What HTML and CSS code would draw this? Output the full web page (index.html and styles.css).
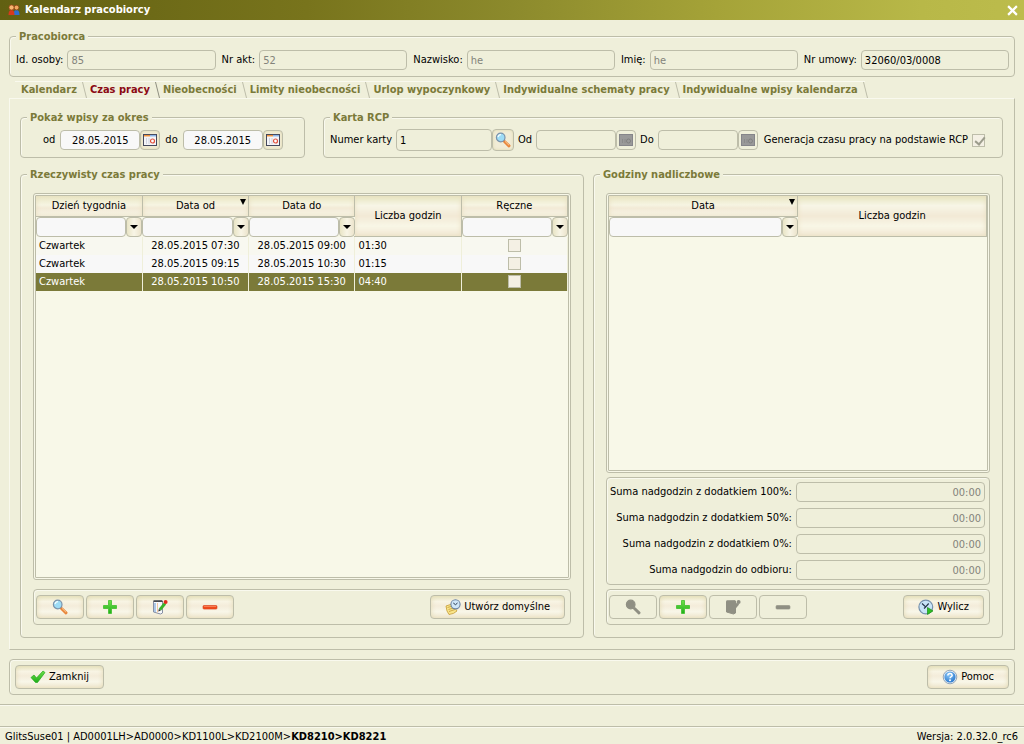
FILE: index.html
```html
<!DOCTYPE html>
<html lang="pl">
<head>
    <meta charset="UTF-8">
    <meta name="viewport" content="width=device-width, initial-scale=1.0">
    <title>Kalendarz pracobiorcy</title>
    <link rel="stylesheet" href="styles.css">
</head>
<body>
    <svg class="icon-defs" aria-hidden="true">
        <defs>
            <linearGradient id="greenFill" x1="0" y1="0" x2="0" y2="1">
                <stop offset="0" stop-color="#6fe04a"/>
                <stop offset="1" stop-color="#1fae1a"/>
            </linearGradient>
            <radialGradient id="blueFill" cx="0.4" cy="0.3" r="0.8">
                <stop offset="0" stop-color="#8cc8f8"/>
                <stop offset="1" stop-color="#1f6fc8"/>
            </radialGradient>
        </defs>
        <symbol id="i-search" viewBox="0 0 16 16">
            <path d="M9.500 9.500l4.500 4.300" stroke="#e8853a" stroke-width="3" stroke-linecap="round"/>
            <path d="M10 9.300l4.100 4" stroke="#f8c890" stroke-width="1"/>
            <circle cx="5.700" cy="5.500" r="4.300" fill="#9edcf6" stroke="#7b93ab" stroke-width="1.200"/>
            <path d="M3 5a3 3 0 0 1 3-2.300" stroke="#f0fcff" stroke-width="1.300" fill="none"/>
        </symbol>
        <symbol id="i-plus" viewBox="0 0 16 16">
            <path d="M6.500 1.500h3v5h5v3h-5v5h-3v-5h-5v-3h5z" fill="url(#greenFill)" stroke="#3fbf2c" stroke-width=".8" stroke-linejoin="round"/>
        </symbol>
        <symbol id="i-edit" viewBox="0 0 16 16">
            <path d="M1.500 2.500l9-.5v12l-2 1-7-2z" fill="#f6f8fc" stroke="#8890a4"/>
            <path d="M1.500 1.300h8.500l1 1.700h-9.500z" fill="#44484e"/>
            <path d="M5.500 4v9.500" stroke="#f0c8a0"/>
            <path d="M3 4v9" stroke="#94b8e0" stroke-width="1.500"/>
            <path d="M8 10.500l5-6" stroke="#38b428" stroke-width="2.800"/>
            <path d="M6.300 12.500l.6-2.700 2 1.600z" fill="#333"/>
            <circle cx="13.600" cy="2.900" r="2" fill="#e02a1c"/>
        </symbol>
        <symbol id="i-minus" viewBox="0 0 16 16">
            <rect x="1" y="6.500" width="14" height="3.600" rx="1" fill="#f04a1c" stroke="#d8401c" stroke-width=".6"/>
            <path d="M2 7.500h12" stroke="#fb8a62" stroke-width=".8"/>
        </symbol>
        <symbol id="i-check" viewBox="0 0 16 16">
            <path d="M1 8.500L4 6l2.500 3L13 2l2 1.500L7.500 13.500h-2z" fill="url(#greenFill)" stroke="#25a81e" stroke-width=".7" stroke-linejoin="round"/>
        </symbol>
        <symbol id="i-notes" viewBox="0 0 16 16">
            <path d="M1 7q3-1 6-2l5 7q-3 3-8 3.500l-2-3.500z" fill="#f9e48a" stroke="#c49a34" stroke-width=".8"/>
            <path d="M2.500 8.500l5-1.500M3.500 10.500l5-1.500M4 12.500l6-2" stroke="#c49a34" stroke-width=".8"/>
            <circle cx="10.500" cy="5.300" r="4.600" fill="#cfe6f8" stroke="#6c84a4" stroke-width="1.100"/>
            <path d="M8.300 4l2.200 1.700L12.500 4" fill="none" stroke="#26364c"/>
        </symbol>
        <symbol id="i-clock" viewBox="0 0 16 16">
            <circle cx="7.800" cy="8" r="6.900" fill="#c8e4f8" stroke="#7690ac" stroke-width="1.200"/>
            <path d="M4 4.500L7.700 8l3-3.500M7.700 8L6 9.500" fill="none" stroke="#25364c" stroke-width="1.200"/>
            <path d="M9.500 8.500l5.500 3.400-5.500 3.600z" fill="#2fbe24" stroke="#178e16" stroke-width=".7"/>
        </symbol>
        <symbol id="i-help" viewBox="0 0 16 16">
            <circle cx="8" cy="8" r="6.800" fill="#e8f0f8" stroke="#7f93aa" stroke-width=".8"/>
            <circle cx="8" cy="8" r="5.600" fill="url(#blueFill)"/>
            <path d="M5.800 6.500q.2-2 2.200-2t2.200 1.800q0 1-1.200 1.600-.9.500-.9 1.300" fill="none" stroke="#fff" stroke-width="1.500"/>
            <circle cx="8" cy="11.300" r="1" fill="#fff"/>
        </symbol>
        <symbol id="i-calendar" viewBox="0 0 14 12">
            <rect x=".5" y=".5" width="13" height="11" fill="#f4f4f8" stroke="#44485c"/>
            <path d="M1 1.700h6" stroke="#f0923c" stroke-width="1.500"/>
            <path d="M7 1.700h6" stroke="#8cb4e8" stroke-width="1.500"/>
            <path d="M3.500 4v6M6 4v6" stroke="#d0d4e0"/>
            <circle cx="9.500" cy="7" r="2" fill="#fff" stroke="#e2513c" stroke-width="1.200"/>
        </symbol>
        <symbol id="i-calendar-off" viewBox="0 0 14 12">
            <rect x=".5" y=".5" width="13" height="11" fill="#999" stroke="#85858a"/>
            <path d="M3.500 5v4M6 5v4" stroke="#8a8a8a"/>
            <circle cx="9.500" cy="7" r="2" fill="none" stroke="#808080"/>
        </symbol>
        <symbol id="i-people" viewBox="0 0 12 12">
            <path d="M5.500 11q0-5 3-5t3 5z" fill="#2f6fd0"/>
            <circle cx="8.500" cy="3.600" r="2.400" fill="#f0a860" stroke="#8a3c10" stroke-width=".7"/>
            <path d="M.5 11q0-5 3-5t3 5z" fill="#d83a1c"/>
            <circle cx="3.500" cy="3.500" r="2.500" fill="#f6b870" stroke="#a8401c" stroke-width=".7"/>
        </symbol>
    </svg>

    <header class="titlebar">
        <svg class="app-icon"><use href="#i-people"/></svg>
        <h1>Kalendarz pracobiorcy</h1>
        <button class="close" aria-label="Zamknij okno">
            <svg viewBox="0 0 10 10"><path d="M1 1l8 8M9 1l-8 8" stroke="#fff" stroke-width="2"/></svg>
        </button>
    </header>

    <main>
        <fieldset class="group person">
            <legend>Pracobiorca</legend>
            <label for="idOsoby">Id. osoby:</label>
            <input id="idOsoby" type="text" value="85" disabled>
            <label for="nrAkt">Nr akt:</label>
            <input id="nrAkt" type="text" value="52" disabled>
            <label for="nazwisko">Nazwisko:</label>
            <input id="nazwisko" type="text" value="he" disabled>
            <label for="imie">Imię:</label>
            <input id="imie" type="text" value="he" disabled>
            <label for="nrUmowy">Nr umowy:</label>
            <input id="nrUmowy" type="text" value="32060/03/0008" readonly>
        </fieldset>

        <nav class="tabs">
            <a href="#">Kalendarz</a>
            <a href="#" class="active">Czas pracy</a>
            <a href="#">Nieobecności</a>
            <a href="#">Limity nieobecności</a>
            <a href="#">Urlop wypoczynkowy</a>
            <a href="#">Indywidualne schematy pracy</a>
            <a href="#">Indywidualne wpisy kalendarza</a>
        </nav>

        <section class="tab-panel">
            <div class="filters">
                <fieldset class="group period">
                    <legend>Pokaż wpisy za okres</legend>
                    <label for="od" class="first">od</label>
                    <span class="picker">
                        <input id="od" type="text" value="28.05.2015">
                        <button aria-label="Wybierz datę od"><svg><use href="#i-calendar"/></svg></button>
                    </span>
                    <label for="do">do</label>
                    <span class="picker">
                        <input id="do" type="text" value="28.05.2015">
                        <button aria-label="Wybierz datę do"><svg><use href="#i-calendar"/></svg></button>
                    </span>
                </fieldset>
                <fieldset class="group card">
                    <legend>Karta RCP</legend>
                    <label for="karta">Numer karty</label>
                    <span class="picker lookup">
                        <input id="karta" type="text" value="1" readonly>
                        <button aria-label="Szukaj karty"><svg><use href="#i-search"/></svg></button>
                    </span>
                    <label for="kartaOd">Od</label>
                    <span class="picker">
                        <input id="kartaOd" type="text" disabled>
                        <button aria-label="Karta od" disabled><svg><use href="#i-calendar-off"/></svg></button>
                    </span>
                    <label for="kartaDo">Do</label>
                    <span class="picker">
                        <input id="kartaDo" type="text" disabled>
                        <button aria-label="Karta do" disabled><svg><use href="#i-calendar-off"/></svg></button>
                    </span>
                    <label class="generate">Generacja czasu pracy na podstawie RCP <input type="checkbox" checked disabled></label>
                </fieldset>
            </div>

            <div class="columns">
                <fieldset class="group worktime">
                    <legend>Rzeczywisty czas pracy</legend>
                    <div class="grid-frame">
                        <table>
                            <thead>
                                <tr>
                                    <th>Dzień tygodnia</th>
                                    <th class="sorted">Data od</th>
                                    <th>Data do</th>
                                    <th rowspan="2" class="tall">Liczba godzin</th>
                                    <th>Ręczne</th>
                                </tr>
                                <tr class="filter-row">
                                    <td><div class="combo"><input type="text" aria-label="Filtr: dzień tygodnia"><button aria-label="Rozwiń"></button></div></td>
                                    <td><div class="combo"><input type="text" aria-label="Filtr: data od"><button aria-label="Rozwiń"></button></div></td>
                                    <td><div class="combo"><input type="text" aria-label="Filtr: data do"><button aria-label="Rozwiń"></button></div></td>
                                    <td><div class="combo"><input type="text" aria-label="Filtr: ręczne"><button aria-label="Rozwiń"></button></div></td>
                                </tr>
                            </thead>
                            <tbody>
                                <tr>
                                    <td>Czwartek</td>
                                    <td class="date">28.05.2015 07:30</td>
                                    <td class="date">28.05.2015 09:00</td>
                                    <td>01:30</td>
                                    <td class="tick"><input type="checkbox" aria-label="Ręczne" disabled></td>
                                </tr>
                                <tr>
                                    <td>Czwartek</td>
                                    <td class="date">28.05.2015 09:15</td>
                                    <td class="date">28.05.2015 10:30</td>
                                    <td>01:15</td>
                                    <td class="tick"><input type="checkbox" aria-label="Ręczne" disabled></td>
                                </tr>
                                <tr class="selected">
                                    <td>Czwartek</td>
                                    <td class="date">28.05.2015 10:50</td>
                                    <td class="date">28.05.2015 15:30</td>
                                    <td>04:40</td>
                                    <td class="tick"><input type="checkbox" aria-label="Ręczne" disabled></td>
                                </tr>
                            </tbody>
                        </table>
                    </div>
                    <div class="box toolbar">
                        <button class="btn icon-btn" aria-label="Podgląd"><svg><use href="#i-search"/></svg></button>
                        <button class="btn icon-btn" aria-label="Dodaj"><svg><use href="#i-plus"/></svg></button>
                        <button class="btn icon-btn" aria-label="Edytuj"><svg><use href="#i-edit"/></svg></button>
                        <button class="btn icon-btn" aria-label="Usuń"><svg><use href="#i-minus"/></svg></button>
                        <button class="btn push"><svg><use href="#i-notes"/></svg>Utwórz domyślne</button>
                    </div>
                </fieldset>

                <fieldset class="group overtime">
                    <legend>Godziny nadliczbowe</legend>
                    <div class="grid-frame">
                        <table>
                            <thead>
                                <tr>
                                    <th class="sorted">Data</th>
                                    <th rowspan="2" class="tall">Liczba godzin</th>
                                </tr>
                                <tr class="filter-row">
                                    <td><div class="combo"><input type="text" aria-label="Filtr: data"><button aria-label="Rozwiń"></button></div></td>
                                </tr>
                            </thead>
                        </table>
                    </div>
                    <div class="box sums">
                        <label for="suma100">Suma nadgodzin z dodatkiem 100%:</label>
                        <input id="suma100" type="text" value="00:00" disabled>
                        <label for="suma50">Suma nadgodzin z dodatkiem 50%:</label>
                        <input id="suma50" type="text" value="00:00" disabled>
                        <label for="suma0">Suma nadgodzin z dodatkiem 0%:</label>
                        <input id="suma0" type="text" value="00:00" disabled>
                        <label for="sumaOdbior">Suma nadgodzin do odbioru:</label>
                        <input id="sumaOdbior" type="text" value="00:00" disabled>
                    </div>
                    <div class="box toolbar">
                        <button class="btn icon-btn" aria-label="Podgląd" disabled><svg><use href="#i-search"/></svg></button>
                        <button class="btn icon-btn" aria-label="Dodaj"><svg><use href="#i-plus"/></svg></button>
                        <button class="btn icon-btn" aria-label="Edytuj" disabled><svg><use href="#i-edit"/></svg></button>
                        <button class="btn icon-btn" aria-label="Usuń" disabled><svg><use href="#i-minus"/></svg></button>
                        <button class="btn push"><svg><use href="#i-clock"/></svg>Wylicz</button>
                    </div>
                </fieldset>
            </div>
        </section>

        <div class="box toolbar actions">
            <button class="btn"><svg><use href="#i-check"/></svg>Zamknij</button>
            <button class="btn push"><svg><use href="#i-help"/></svg>Pomoc</button>
        </div>
    </main>

    <div class="message-bar"></div>
    <footer class="statusbar">
        <span>GlitsSuse01 | AD0001LH&gt;AD0000&gt;KD1100L&gt;KD2100M&gt;<b>KD8210&gt;KD8221</b></span>
        <span>Wersja: 2.0.32.0_rc6</span>
    </footer>
</body>
</html>
```
FILE: styles.css
```css
* {
    box-sizing: border-box;
}

body {
    margin: 0;
    min-height: 100vh;
    display: flex;
    flex-direction: column;
    background-color: #efefda;
    color: #000;
    font-family: "DejaVu Sans Condensed", "DejaVu Sans", sans-serif;
    font-size: 11px;
    line-height: 14px;
}

input,
button {
    font: inherit;
    color: inherit;
    margin: 0;
}

label {
    white-space: nowrap;
}

.icon-defs {
    position: absolute;
    width: 0;
    height: 0;
}

/* title bar */
.titlebar {
    display: flex;
    align-items: center;
    height: 20px;
    padding: 0 6px 0 8px;
    background: linear-gradient(to right, #626012, #78741c 30%, #8c8a2c 50%, #a5a338 70%, #b8b848 90%, #bcbc4c);
    color: #fff;
}

.titlebar h1 {
    margin: 0;
    flex: 1;
    font-size: 11px;
}

.app-icon {
    width: 12px;
    height: 12px;
    margin-right: 5px;
}

.close {
    padding: 0;
    border: none;
    background: none;
    line-height: 0;
}

.close svg {
    width: 11px;
    height: 11px;
}

main {
    flex: 1;
    display: flex;
    flex-direction: column;
    padding: 9px;
}

/* framed groups */
.group {
    margin: 0;
    min-width: 0;
    padding: 6px 5px 6px 6px;
    border: 1px solid #bdbda9;
    border-radius: 4px;
    box-shadow: inset 1px 1px 0 #f9f9ee;
}

.group legend {
    padding: 0 3px;
    background-color: #efefda;
    color: #7b7a39;
    font-weight: bold;
    line-height: 15px;
}

.box {
    border: 1px solid #bdbda9;
    border-radius: 4px;
    box-shadow: inset 1px 1px 0 #f9f9ee;
}

input[type="text"] {
    height: 20px;
    min-width: 0;
    padding: 0 3px;
    border: 1px solid #bdbda9;
    border-radius: 4px;
    background-color: #f8f8f8;
    outline: none;
}

input[type="text"]:disabled,
input[type="text"]:read-only {
    background-color: #efefda;
}

input[type="text"]:disabled {
    color: #83837b;
}

input[type="checkbox"] {
    appearance: none;
    display: block;
    width: 13px;
    height: 13px;
    border: 1px solid #bdbda9;
    background-color: #f4f0e4;
}

input[type="checkbox"]:checked::after {
    content: "";
    display: block;
    width: 4px;
    height: 8px;
    margin-left: 4px;
    border: solid #9c9c8c;
    border-width: 0 2px 2px 0;
    transform: rotate(40deg);
}

.person {
    display: flex;
    align-items: center;
    gap: 4px;
}

.person input {
    flex: 1;
    margin-right: 2px;
}

.person input:last-child {
    margin-right: 0;
}

/* tabs */
.tabs {
    display: flex;
    height: 17px;
    margin-top: 4px;
    padding-left: 6px;
}

.tabs a {
    position: relative;
    padding: 0 7px 0 6px;
    border-top: 1px solid #f9f9ee;
    color: #7b7a39;
    font-weight: bold;
    line-height: 15px;
    text-decoration: none;
    white-space: nowrap;
}

.tabs a::after {
    content: "";
    position: absolute;
    top: 0;
    right: -1px;
    width: 1px;
    height: 16px;
    background-color: #bdbda9;
    transform: skewX(14deg);
}

.tabs a.active {
    color: #8b0a14;
}

.tabs a.active::after {
    background-color: #8f8f80;
}

.tab-panel {
    flex: 1;
    display: flex;
    flex-direction: column;
    gap: 9px;
    padding: 11px 11px 11px 10px;
    border: 1px solid #bdbda9;
    border-top-color: #f9f9ee;
    border-left-color: #f9f9ee;
}

.filters {
    display: grid;
    grid-template-columns: minmax(0, 285fr) minmax(0, 680fr);
    gap: 18px;
}

.period,
.card {
    display: flex;
    align-items: center;
    gap: 5px;
    padding-top: 4px;
}

.period .first {
    margin-left: 16px;
}

.card {
    gap: 4px;
}

.picker {
    display: flex;
}

.picker input[type="text"] {
    width: 80px;
}

.picker button {
    display: flex;
    align-items: center;
    justify-content: center;
    width: 20px;
    height: 20px;
    padding: 0;
    border: 1px solid #bdbda9;
    border-radius: 4px;
    background-color: #f1ecd6;
    box-shadow: inset 0 0 3px #dcd8ac;
}

.picker button:disabled {
    background: none;
    box-shadow: none;
}

.picker svg {
    width: 14px;
    height: 12px;
}

.period .picker input {
    text-align: center;
}

.lookup input[type="text"] {
    width: 96px;
    height: 22px;
}

.lookup button {
    width: 22px;
    height: 22px;
}

.lookup svg {
    width: 16px;
    height: 16px;
}

.generate {
    display: flex;
    align-items: center;
    gap: 4px;
    margin-left: 2px;
}

/* two main columns */
.columns {
    flex: 1;
    display: grid;
    grid-template-columns: minmax(0, 564fr) minmax(0, 410fr);
    gap: 9px;
}

.worktime,
.overtime {
    display: flex;
    flex-direction: column;
    padding: 11px 12px 12px;
}

.worktime legend,
.overtime legend {
    margin-left: -6px;
}

.grid-frame {
    flex: 1;
    border: 3px double #bdbda9;
    border-radius: 3px;
    background-color: #f8f8e8;
}

table {
    width: 100%;
    table-layout: fixed;
    border-collapse: collapse;
}

th {
    position: relative;
    height: 20px;
    padding: 0;
    border-right: 1px solid #bdbda9;
    border-bottom: 1px solid #bdbda9;
    background: linear-gradient(#e9e7c4, #f6f4e2 45%, #f2ead6 60%, #f8f6e8);
    box-shadow: inset 0 0 5px #e9dfc0;
    font-weight: normal;
}

th.tall {
    background: linear-gradient(#e6e5c0, #f7f5e6 24%, #f2e9d5 50%, #f8f6e6 75%, #f2e8d4);
}

.sorted::after {
    content: "";
    position: absolute;
    top: 3px;
    right: 2px;
    border: 3px solid transparent;
    border-top: 6px solid #000;
    border-bottom: none;
}

.filter-row td {
    height: 20px;
    padding: 0;
    border: none;
}

.combo {
    display: flex;
}

.combo input[type="text"] {
    flex: 1;
    width: 0;
}

.combo button {
    width: 16px;
    height: 20px;
    padding: 0 0 0 3px;
    border: 1px solid #bdbda9;
    border-radius: 4px;
    background: linear-gradient(to right, #e9e5c6, #f8f5e6, #ece4cc);
}

.combo button::before {
    content: "";
    display: block;
    width: 0;
    border: 4px solid transparent;
    border-top-color: #000;
    border-bottom: none;
}

tbody td {
    height: 18px;
    padding: 0 3px;
    border-right: 1px solid #efefda;
    background-color: #f8f8f0;
    white-space: nowrap;
}

tbody tr:nth-child(even) td {
    background-color: #f8f8f8;
}

tbody .selected td {
    background-color: #7b7a39;
    color: #fff;
}

.date {
    text-align: center;
}

.tick input[type="checkbox"] {
    margin: 0 auto;
}

/* buttons */
.toolbar {
    display: flex;
    gap: 2px;
    margin-top: 9px;
    padding: 5px 5px 5px 2px;
}

.btn {
    display: flex;
    align-items: center;
    justify-content: center;
    gap: 3px;
    height: 24px;
    padding: 0 14px;
    border: 1px solid #bdbda9;
    border-radius: 4px;
    background: linear-gradient(#e9e6c4, #f8f4e4 25%, #f4ecda 45%, #f8f6e8 70%, #f3ebd6);
    box-shadow: inset 0 0 5px #e2dab4;
    white-space: nowrap;
}

.btn svg {
    width: 16px;
    height: 16px;
}

.icon-btn {
    width: 48px;
    padding: 0;
}

.btn:disabled {
    background: none;
    box-shadow: none;
}

.btn:disabled svg {
    filter: brightness(0) opacity(0.4);
}

.push {
    margin-left: auto;
}

.actions {
    padding: 5px;
}

.sums {
    display: grid;
    grid-template-columns: auto 1fr;
    align-items: center;
    gap: 6px 4px;
    margin-top: 4px;
    padding: 4px 4px 4px 3px;
}

.sums + .toolbar {
    margin-top: 4px;
}

.sums label {
    text-align: right;
}

.sums input[type="text"] {
    width: 100%;
    text-align: right;
}

/* bottom bars */
.message-bar {
    height: 22px;
    border-top: 1px solid #bdbda9;
    box-shadow: inset 0 1px 0 #f9f9ee;
}

.statusbar {
    display: flex;
    justify-content: space-between;
    height: 18px;
    padding: 3px 6px 0 5px;
    border-top: 1px solid #bdbda9;
    box-shadow: inset 0 1px 0 #f9f9ee;
}
```
